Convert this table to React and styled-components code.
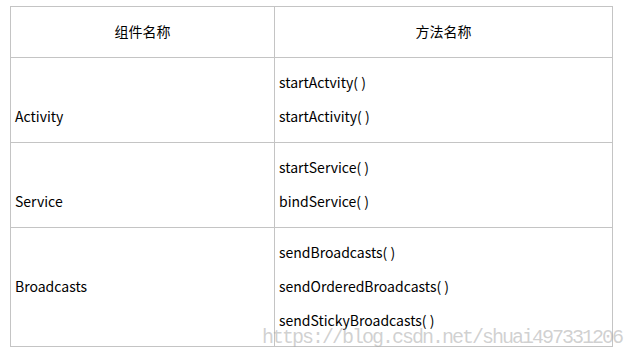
import React from 'react';
import styled, { createGlobalStyle } from 'styled-components';

const GlobalStyle = createGlobalStyle`
  html, body {
    margin: 0;
    padding: 0;
    background: #ffffff;
  }
  body {
    font-family: 'Noto Sans CJK SC', 'Noto Sans', sans-serif;
    color: #000000;
  }
`;

const Page = styled.div`
  position: relative;
  width: 635px;
  height: 354px;
  padding: 6px 0 0 10px;
  box-sizing: border-box;
  overflow: hidden;
`;

const Grid = styled.div`
  display: grid;
  grid-template-columns: 264px 338px;
  border-left: 1px solid #c4c4c4;
  border-top: 1px solid #c4c4c4;
  width: 603px;
  box-sizing: border-box;
`;

const HeadCell = styled.div`
  height: 51px;
  box-sizing: border-box;
  border-right: 1px solid #c4c4c4;
  border-bottom: 1px solid #c4c4c4;
  padding-bottom: 2px;
  display: flex;
  align-items: center;
  justify-content: center;
  font-size: 14px;
`;

const Cell = styled.div`
  box-sizing: border-box;
  border-right: 1px solid #c4c4c4;
  border-bottom: 1px solid #c4c4c4;
  padding: 7px 3px 9px 4px;
  display: flex;
  flex-direction: column;
`;

const Line = styled.div`
  height: 34px;
  line-height: 34px;
  font-size: 14px;
  white-space: nowrap;
`;

const Watermark = styled.div`
  position: absolute;
  left: 262px;
  top: 326px;
  font-family: 'Liberation Mono', 'DejaVu Sans Mono', monospace;
  font-size: 20px;
  letter-spacing: -2px;
  color: rgba(170, 170, 170, 0.55);
  white-space: nowrap;
  pointer-events: none;
`;

const rows = [
  { name: 'Activity', methods: ['startActvity( )', 'startActivity( )'] },
  { name: 'Service', methods: ['startService( )', 'bindService( )'] },
  {
    name: 'Broadcasts',
    methods: ['sendBroadcasts( )', 'sendOrderedBroadcasts( )', 'sendStickyBroadcasts( )'],
  },
];

function App() {
  return (
    <Page>
      <GlobalStyle />
      <Grid>
        <HeadCell>组件名称</HeadCell>
        <HeadCell>方法名称</HeadCell>
        {rows.map((r) => (
          <React.Fragment key={r.name}>
            <Cell>
              <Line />
              <Line>{r.name}</Line>
            </Cell>
            <Cell>
              {r.methods.map((m) => (
                <Line key={m}>{m}</Line>
              ))}
            </Cell>
          </React.Fragment>
        ))}
      </Grid>
      <Watermark>https://blog.csdn.net/shuai497331206</Watermark>
    </Page>
  );
}

export default App;
